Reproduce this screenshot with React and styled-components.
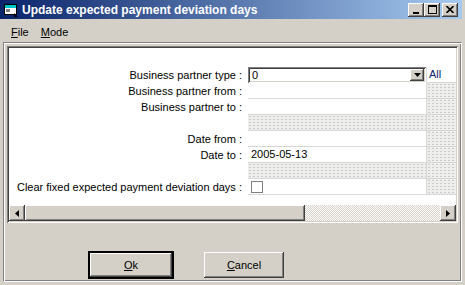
import React from 'react';
import styled, { createGlobalStyle, css } from 'styled-components';

const Global = createGlobalStyle`
  html, body {
    margin: 0;
    padding: 0;
    background: #d4d0c8;
  }
  body {
    font-family: 'Liberation Sans', Arial, sans-serif;
    font-size: 11px;
    color: #000;
  }
`;

const raised = css`
  background: #d4d0c8;
  box-shadow: inset -1px -1px #404040, inset 1px 1px #fff,
    inset -2px -2px #808080, inset 2px 2px #d4d0c8;
`;

const sunken = css`
  box-shadow: inset 1px 1px #808080, inset -1px -1px #fff,
    inset 2px 2px #404040, inset -2px -2px #d4d0c8;
`;

const dotted = css`
  background-color: #eeeeec;
  background-image: radial-gradient(#c4c4c4 0.45px, transparent 0.8px);
  background-size: 4px 3px;
`;

const Window = styled.div`
  width: 465px;
  height: 285px;
  box-sizing: border-box;
  padding-right: 3px;
  background: #d4d0c8;
  display: flex;
  flex-direction: column;
  overflow: hidden;
`;

const TitleBar = styled.div`
  height: 19px;
  display: flex;
  align-items: center;
  padding: 0 4px 0 3px;
  background: linear-gradient(to right, #0a246a, #a6caf0);
`;

const Title = styled.div`
  flex: 1;
  margin-left: 3px;
  color: #fff;
  font-weight: bold;
  font-size: 12px;
  white-space: nowrap;
`;

const Caps = styled.div`
  display: flex;
`;

const CapBtn = styled.div`
  ${raised};
  width: 16px;
  height: 14px;
  margin-left: ${p => (p.$gap ? '2px' : '0')};
  display: flex;
  align-items: center;
  justify-content: center;
`;

const MenuBar = styled.div`
  height: 21px;
  display: flex;
  align-items: center;
  padding-left: 5px;
`;

const MenuItem = styled.div`
  padding: 0 6px;
  line-height: 14px;
  margin-top: 4px;
`;

const Frame = styled.div`
  flex: 1;
  margin: 2px 0 3px 3px;
  border-top: 1px solid #808080;
  border-left: 1px solid #808080;
  border-right: 1px solid #fff;
  border-bottom: 1px solid #fff;
  box-shadow: inset 1px 1px #fff, inset -1px -1px #808080;
  padding: 3px 3px 0 3px;
  display: flex;
  flex-direction: column;
`;

const Panel = styled.div`
  ${sunken};
  background: #fff;
  padding: 2px;
  display: flex;
  flex-direction: column;
`;

const Form = styled.div`
  display: grid;
  grid-template-columns: 239px 178px 1fr;
  grid-auto-rows: 16px;
  padding: 19px 0 10px;
`;

const Label = styled.div`
  text-align: right;
  padding-right: 6px;
  line-height: 16px;
  white-space: nowrap;
`;

const Cell = styled.div`
  box-sizing: border-box;
  border-bottom: 1px solid #d8d8d8;
  line-height: 15px;
  padding-left: 3px;
  display: flex;
  align-items: center;
  ${p => p.$blank && dotted};
`;

const Side = styled.div`
  box-sizing: border-box;
  border-left: 1px solid #d8d8d8;
  border-bottom: 1px solid #d8d8d8;
  ${p => (p.$plain ? 'background: #fff;' : dotted)};
  color: #0a246a;
  line-height: 15px;
  padding-left: 2px;
`;

const Combo = styled.div`
  ${sunken};
  background: #fff;
  height: 16px;
  box-sizing: border-box;
  display: flex;
  align-items: center;
  padding: 2px 2px 2px 4px;
`;

const ComboText = styled.div`
  flex: 1;
  line-height: 12px;
`;

const DropBtn = styled.div`
  ${raised};
  width: 14px;
  height: 12px;
  display: flex;
  align-items: center;
  justify-content: center;
`;

const Check = styled.div`
  width: 10px;
  height: 10px;
  border: 1px solid #808080;
  background: #fff;
`;

const HScroll = styled.div`
  height: 16px;
  display: flex;
  background-color: #fff;
  background-image: conic-gradient(#d4d0c8 25%, #fff 0 50%, #d4d0c8 0 75%, #fff 0);
  background-size: 2px 2px;
`;

const Arrow = styled.div`
  ${raised};
  width: 16px;
  height: 16px;
  display: flex;
  align-items: center;
  justify-content: center;
  flex-shrink: 0;
`;

const Thumb = styled.div`
  ${raised};
  width: 280px;
  height: 16px;
`;

const Track = styled.div`
  flex: 1;
`;

const ButtonRow = styled.div`
  display: flex;
  gap: 31px;
  padding-left: 82px;
  margin-top: 29px;
`;

const Button = styled.div`
  ${raised};
  width: ${p => p.$w}px;
  height: 26px;
  display: flex;
  align-items: center;
  justify-content: center;
  ${p =>
    p.$default &&
    css`
      outline: 1px solid #000;
      outline-offset: 0;
      box-shadow: inset 1px 1px #000, inset -1px -1px #000, inset -2px -2px #404040,
        inset 2px 2px #fff, inset -3px -3px #808080;
    `};
`;

const rows = [
  { label: 'Business partner type :', kind: 'combo', value: '0', side: 'All' },
  { label: 'Business partner from :' },
  { label: 'Business partner to :' },
  { kind: 'blank' },
  { label: 'Date from :' },
  { label: 'Date to :', value: '2005-05-13' },
  { kind: 'blank' },
  { label: 'Clear fixed expected payment deviation days :', kind: 'check' },
];

const AppIcon = () => (
  <svg width="16" height="16" viewBox="0 0 16 16">
    <rect x="1.5" y="2.5" width="12" height="10" fill="#fff" stroke="#000" />
    <rect x="2" y="3" width="11" height="3" fill="#00c8c8" />
    <rect x="3" y="7" width="4" height="3" fill="#808080" />
    <path d="M11 11 L15 15 L11 15 Z" fill="#000" />
  </svg>
);

const Tri = ({ dir }) => {
  const d = {
    down: 'M0 0 H7 L3.5 4 Z',
    left: 'M4 0 V7 L0 3.5 Z',
    right: 'M0 0 V7 L4 3.5 Z',
  }[dir];
  const w = dir === 'down' ? 7 : 4;
  const h = dir === 'down' ? 4 : 7;
  return (
    <svg width={w} height={h} viewBox={`0 0 ${w} ${h}`}>
      <path d={d} fill="#000" />
    </svg>
  );
};

const renderField = r => {
  if (r.kind === 'combo') {
    return (
      <Combo>
        <ComboText>{r.value}</ComboText>
        <DropBtn>
          <Tri dir="down" />
        </DropBtn>
      </Combo>
    );
  }
  if (r.kind === 'blank') return <Cell $blank />;
  if (r.kind === 'check') {
    return (
      <Cell>
        <Check />
      </Cell>
    );
  }
  return <Cell>{r.value}</Cell>;
};

export default function App() {
  return (
    <>
      <Global />
      <Window>
        <TitleBar>
          <AppIcon />
          <Title>Update expected payment deviation days</Title>
          <Caps>
            <CapBtn>
              <svg width="8" height="8" viewBox="0 0 8 8">
                <rect x="1" y="6" width="6" height="2" fill="#000" />
              </svg>
            </CapBtn>
            <CapBtn>
              <svg width="9" height="9" viewBox="0 0 9 9">
                <rect x="0.5" y="0.5" width="8" height="8" fill="none" stroke="#000" />
                <rect x="0" y="0" width="9" height="2" fill="#000" />
              </svg>
            </CapBtn>
            <CapBtn $gap>
              <svg width="8" height="7" viewBox="0 0 8 7">
                <path d="M0.5 0 L7.5 7 M7.5 0 L0.5 7" stroke="#000" strokeWidth="1.6" />
              </svg>
            </CapBtn>
          </Caps>
        </TitleBar>
        <MenuBar>
          <MenuItem>
            <u>F</u>ile
          </MenuItem>
          <MenuItem>
            <u>M</u>ode
          </MenuItem>
        </MenuBar>
        <Frame>
          <Panel>
            <Form>
              {rows.map((r, i) => (
                <React.Fragment key={i}>
                  <Label>{r.label}</Label>
                  {renderField(r)}
                  <Side $plain={!!r.side}>{r.side}</Side>
                </React.Fragment>
              ))}
            </Form>
            <HScroll>
              <Arrow>
                <Tri dir="left" />
              </Arrow>
              <Thumb />
              <Track />
              <Arrow>
                <Tri dir="right" />
              </Arrow>
            </HScroll>
          </Panel>
          <ButtonRow>
            <Button $default $w={84}>
              <span>
                <u>O</u>k
              </span>
            </Button>
            <Button $w={80}>
              <span>
                <u>C</u>ancel
              </span>
            </Button>
          </ButtonRow>
        </Frame>
      </Window>
    </>
  );
}
